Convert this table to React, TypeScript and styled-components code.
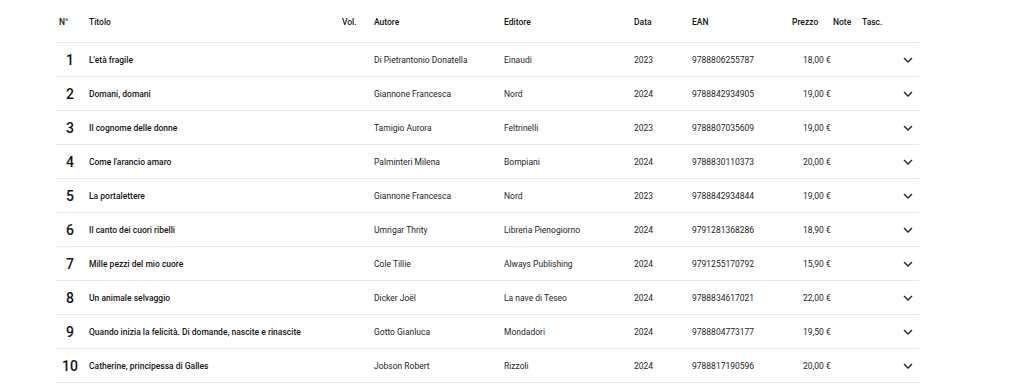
import React from "react";
import styled, { createGlobalStyle } from "styled-components";

const Global = createGlobalStyle`
  html, body { margin: 0; padding: 0; background: #ffffff; }
  body { font-family: Roboto, "Liberation Sans", Arial, sans-serif; color: #1a1a1a; }
`;

const Page = styled.div`
  padding-left: 55px;
  width: 864px;
`;

const cols = "34px 253px 32px 130px 130px 58px 100px 41px 29px 57px";

const HeaderRow = styled.div`
  display: grid;
  grid-template-columns: ${cols};
  box-sizing: border-box;
  height: 43px;
  padding-top: 2px;
  align-items: center;
  border-bottom: 1px solid #e8e8e8;
`;

const Row = styled.div`
  display: grid;
  grid-template-columns: ${cols};
  box-sizing: border-box;
  height: 34px;
  align-items: center;
  border-bottom: 1px solid #e8e8e8;
`;

const Th = styled.div<{ $pl?: number }>`
  font-size: 8.5px;
  font-weight: 500;
  color: #141414;
  padding-left: ${(p) => p.$pl ?? 0}px;
  white-space: nowrap;
`;

const Num = styled.div`
  font-size: 14px;
  font-weight: 500;
  color: #141414;
  width: 30px;
  text-align: center;
  padding-top: 1px;
`;

const Title = styled.div`
  font-size: 8.5px;
  font-weight: 500;
  color: #141414;
  white-space: nowrap;
`;

const Td = styled.div<{ $pl?: number }>`
  font-size: 8.5px;
  font-weight: 400;
  color: #1e1e1e;
  padding-left: ${(p) => p.$pl ?? 0}px;
  white-space: nowrap;
`;

const ChevronCell = styled.div`
  display: flex;
  justify-content: flex-end;
  padding-right: 2px;
  color: #2e2e2e;
`;

const Chevron = () => (
  <svg width="18" height="18" viewBox="0 0 24 24" fill="currentColor">
    <path d="M16.59 8.59 12 13.17 7.41 8.59 6 10l6 6 6-6z" />
  </svg>
);

type Book = {
  t: string;
  a: string;
  e: string;
  d: string;
  ean: string;
  p: string;
};

const books: Book[] = [
  { t: "L'età fragile", a: "Di Pietrantonio Donatella", e: "Einaudi", d: "2023", ean: "9788806255787", p: "18,00 €" },
  { t: "Domani, domani", a: "Giannone Francesca", e: "Nord", d: "2024", ean: "9788842934905", p: "19,00 €" },
  { t: "Il cognome delle donne", a: "Tamigio Aurora", e: "Feltrinelli", d: "2023", ean: "9788807035609", p: "19,00 €" },
  { t: "Come l'arancio amaro", a: "Palminteri Milena", e: "Bompiani", d: "2024", ean: "9788830110373", p: "20,00 €" },
  { t: "La portalettere", a: "Giannone Francesca", e: "Nord", d: "2023", ean: "9788842934844", p: "19,00 €" },
  { t: "Il canto dei cuori ribelli", a: "Umrigar Thrity", e: "Libreria Pienogiorno", d: "2024", ean: "9791281368286", p: "18,90 €" },
  { t: "Mille pezzi del mio cuore", a: "Cole Tillie", e: "Always Publishing", d: "2024", ean: "9791255170792", p: "15,90 €" },
  { t: "Un animale selvaggio", a: "Dicker Joël", e: "La nave di Teseo", d: "2024", ean: "9788834617021", p: "22,00 €" },
  { t: "Quando inizia la felicità. Di domande, nascite e rinascite", a: "Gotto Gianluca", e: "Mondadori", d: "2024", ean: "9788804773177", p: "19,50 €" },
  { t: "Catherine, principessa di Galles", a: "Jobson Robert", e: "Rizzoli", d: "2024", ean: "9788817190596", p: "20,00 €" },
];

export default function App() {
  return (
    <>
      <Global />
      <Page>
        <HeaderRow>
          <Th $pl={4}>N°</Th>
          <Th>Titolo</Th>
          <Th>Vol.</Th>
          <Th>Autore</Th>
          <Th>Editore</Th>
          <Th>Data</Th>
          <Th>EAN</Th>
          <Th>Prezzo</Th>
          <Th>Note</Th>
          <Th>Tasc.</Th>
        </HeaderRow>
        {books.map((b, i) => (
          <Row key={b.ean}>
            <Num>{i + 1}</Num>
            <Title>{b.t}</Title>
            <Td />
            <Td>{b.a}</Td>
            <Td>{b.e}</Td>
            <Td>{b.d}</Td>
            <Td>{b.ean}</Td>
            <Td $pl={11}>{b.p}</Td>
            <Td />
            <ChevronCell>
              <Chevron />
            </ChevronCell>
          </Row>
        ))}
      </Page>
    </>
  );
}
